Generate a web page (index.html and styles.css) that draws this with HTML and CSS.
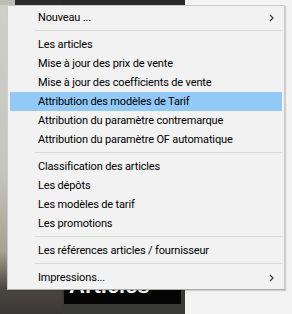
FILE: index.html
```html
<!DOCTYPE html>
<html lang="fr">
<head>
    <meta charset="UTF-8">
    <title>Menu articles</title>
    <link rel="stylesheet" href="styles.css">
</head>
<body>
    <!-- Background window, mostly hidden by the menu -->
    <div class="backdrop">
        <div class="col-left"></div>
        <div class="col-mid">
            <div class="mid-top"></div>
            <div class="mid-fill"></div>
            <div class="title-box">Articles</div>
        </div>
        <div class="col-right"></div>
    </div>

    <!-- Context menu -->
    <div class="menu">
        <div class="item">Nouveau ...
            <svg class="arrow" width="5" height="8" viewBox="0 0 5 8"><path d="M1 1 L4 4 L1 7" fill="none" stroke="#3c3c3c" stroke-width="1.2"/></svg>
        </div>
        <div class="sep"></div>
        <div class="item">Les articles</div>
        <div class="item">Mise à jour des prix de vente</div>
        <div class="item">Mise à jour des coefficients de vente</div>
        <div class="item active">Attribution des modèles de Tarif</div>
        <div class="item">Attribution du paramètre contremarque</div>
        <div class="item">Attribution du paramètre OF automatique</div>
        <div class="sep"></div>
        <div class="item">Classification des articles</div>
        <div class="item">Les dépôts</div>
        <div class="item">Les modèles de tarif</div>
        <div class="item">Les promotions</div>
        <div class="sep"></div>
        <div class="item">Les références articles / fournisseur</div>
        <div class="sep"></div>
        <div class="item">Impressions...
            <svg class="arrow" width="5" height="8" viewBox="0 0 5 8"><path d="M1 1 L4 4 L1 7" fill="none" stroke="#3c3c3c" stroke-width="1.2"/></svg>
        </div>
    </div>
</body>
</html>
```

FILE: styles.css
```css
body {
    margin: 0;
    width: 292px;
    height: 314px;
    overflow: hidden;
    position: relative;
    font-family: Roboto, "Noto Sans", sans-serif;
    background: #f4f4f4;
}
.backdrop {
    display: flex;
    height: 314px;
}
.col-left {
    width: 62px;
    background:
        linear-gradient(to right, #bdbdb8 0, #bdbdb8 15px, #2c2c2c 15px) top / 100% 5px no-repeat,
        linear-gradient(to bottom, #cfcfcb 0%, #c4c6bd 55%, #a8a090 80%, #4a4640 92%, #3a3835 100%);
}
.col-mid {
    width: 123px;
    display: flex;
    flex-direction: column;
    background: #3a3a38;
}
.mid-top {
    height: 6px;
    background: #2a2a2a;
}
.mid-fill {
    flex: 1;
}
.title-box {
    height: 32px;
    margin: 0 4px 10px 2px;
    background: #050505;
    border-top: 1px solid #9a9a9a;
    color: #fff;
    font-family: "Liberation Sans", Arial, sans-serif;
    font-weight: bold;
    font-size: 22px;
    line-height: 26px;
    padding-left: 5px;
    box-sizing: border-box;
}
.col-right {
    flex: 1;
    background: #f3f3f3;
}
.menu {
    position: absolute;
    left: 7px;
    top: 5px;
    width: 278px;
    box-sizing: border-box;
    padding: 2px;
    background: #f2f2f2;
    border: 1px solid #cccccc;
    border-bottom-color: #a9aea8;
    box-shadow: 1px 1px 1px rgba(0, 0, 0, 0.15);
}
.item {
    height: 19px;
    display: flex;
    align-items: center;
    justify-content: space-between;
    padding: 0 8px 0 28px;
    font-size: 11px;
    letter-spacing: -0.15px;
    color: #000;
    white-space: nowrap;
}
.item.active {
    background: #91c9f7;
}
.sep {
    height: 8px;
    margin-left: 25px;
    position: relative;
}
.sep::after {
    content: "";
    position: absolute;
    left: 0;
    right: 0;
    top: 3px;
    height: 1px;
    background: #d9dcd6;
}
```
